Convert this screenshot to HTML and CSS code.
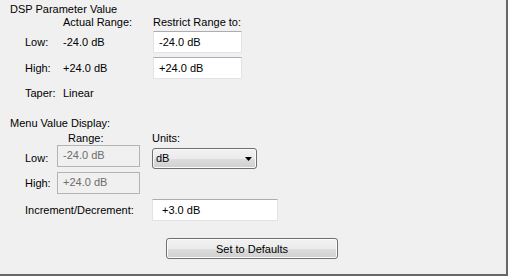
FILE: index.html
```html
<!DOCTYPE html>
<html lang="en">
<head>
<meta charset="UTF-8">
<meta name="viewport" content="width=device-width, initial-scale=1.0">
<title>DSP Parameter Value</title>
<link rel="stylesheet" href="styles.css">
</head>
<body>

<div class="panel">
    <div class="group-title">DSP Parameter Value</div>

    <div class="row heads">
        <span class="lbl"></span>
        <span class="col-a">Actual Range:</span>
        <span>Restrict Range to:</span>
    </div>
    <div class="row field-row">
        <span class="lbl">Low:</span>
        <span class="col-a">-24.0 dB</span>
        <input class="field" type="text" value="-24.0 dB">
    </div>
    <div class="row field-row second">
        <span class="lbl">High:</span>
        <span class="col-a">+24.0 dB</span>
        <input class="field" type="text" value="+24.0 dB">
    </div>
    <div class="row taper">
        <span class="lbl">Taper:</span>
        <span class="col-a">Linear</span>
    </div>

    <div class="group-title menu-title">Menu Value Display:</div>

    <div class="row heads menu-heads">
        <span class="range-head">Range:</span>
        <span>Units:</span>
    </div>
    <div class="row menu-row">
        <span class="lbl-s low-lbl">Low:</span>
        <input class="field disabled" type="text" value="-24.0 dB" disabled>
        <div class="combo">
            <span>dB</span>
            <svg width="7" height="4" viewBox="0 0 7 4"><path d="M0 0H7L3.5 4Z" fill="#000"/></svg>
        </div>
    </div>
    <div class="row menu-row high-row">
        <span class="lbl-s high-lbl">High:</span>
        <input class="field disabled" type="text" value="+24.0 dB" disabled>
    </div>
    <div class="row inc-row">
        <span class="lbl-inc">Increment/Decrement:</span>
        <input class="field inc" type="text" value="+3.0 dB">
    </div>

    <button class="defaults">Set to Defaults</button>
</div>

</body>
</html>
```

FILE: styles.css
```css
body {
    margin: 0;
    padding: 0;
    width: 508px;
    height: 276px;
    background: #f0f0f0;
    font-family: "Liberation Sans", Arial, sans-serif;
    font-size: 11px;
    color: #000;
    overflow: hidden;
}
.panel {
    box-sizing: border-box;
    width: 508px;
    height: 276px;
    padding: 3px 0 0 10px;
    border-right: 2px solid #676767;
    border-bottom: 2px solid #676767;
}
.group-title {
    line-height: 13px;
}
.row {
    display: flex;
    align-items: center;
    padding-left: 15px;
    line-height: 13px;
}
.lbl {
    width: 38px;
}
.col-a {
    width: 90px;
}
.heads {
    height: 13px;
    margin-bottom: 2px;
}
.field-row {
    height: 22px;
}
.field-row.second {
    margin-top: 4px;
}
.field {
    box-sizing: border-box;
    width: 89px;
    height: 22px;
    margin: 0;
    padding: 0 0 1px 5px;
    border: 1px solid #e2e3ea;
    border-top-color: #abadb3;
    background: #fff;
    font-family: inherit;
    font-size: 11px;
    color: #000;
    outline: none;
}
.taper {
    margin-top: 8px;
}
.menu-title {
    margin-top: 17px;
}
.menu-heads {
    margin-top: 2px;
    margin-bottom: 0;
}
.range-head {
    margin-left: 43px;
    width: 84px;
}
.menu-row {
    align-items: flex-start;
    height: 22px;
}
.lbl-s {
    width: 32px;
}
.low-lbl {
    margin-top: 7px;
}
.high-lbl {
    margin-top: 5px;
}
.high-row {
    margin-top: 5px;
}
.field.disabled {
    width: 83px;
    background: #f0f0f0;
    border: 1px solid #b4b4b4;
    color: #6d6d6d;
    padding-bottom: 2px;
}
.combo {
    box-sizing: border-box;
    display: flex;
    align-items: center;
    justify-content: space-between;
    width: 105px;
    height: 21px;
    margin: 3px 0 0 12px;
    padding: 0 3px 0 3px;
    border: 1px solid #707070;
    border-radius: 3px;
    background: linear-gradient(#f2f2f2 0%, #ebebeb 50%, #dddddd 51%, #cfcfcf 100%);
    box-shadow: inset 0 0 0 1px #fafafa;
}
.combo svg {
    margin-right: 1px;
}
.inc-row {
    margin-top: 5px;
    height: 22px;
}
.lbl-inc {
    width: 127px;
}
.field.inc {
    width: 126px;
    padding-left: 9px;
}
.defaults {
    display: block;
    box-sizing: border-box;
    width: 172px;
    height: 21px;
    margin: 17px 0 0 156px;
    padding: 0;
    border: 1px solid #707070;
    border-radius: 3px;
    background: linear-gradient(#f2f2f2 0%, #ebebeb 50%, #dddddd 51%, #cfcfcf 100%);
    box-shadow: inset 0 0 0 1px #fcfcfc;
    font-family: inherit;
    font-size: 11px;
    color: #000;
}
```
